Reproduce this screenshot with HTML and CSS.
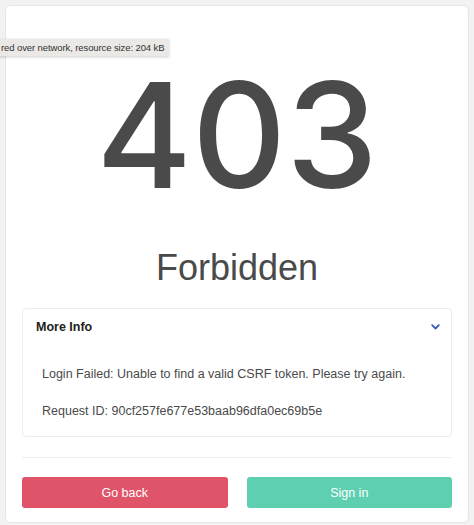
FILE: index.html
```html
<!DOCTYPE html>
<html lang="en">
  <head>
    <meta charset="UTF-8" />
    <meta name="viewport" content="width=device-width, initial-scale=1.0" />
    <title>403 Forbidden</title>
    <link rel="stylesheet" href="styles.css">
  </head>
  <body>
    <!-- Error card -->
    <main class="error-card">
      <h1 class="error-code">403</h1>
      <h2 class="error-title">Forbidden</h2>

      <section class="more-info">
        <div class="more-info-header">
          <span>More Info</span>
          <svg class="chevron" width="9" height="6" viewBox="0 0 9 6">
            <path d="M1.2 1.2 L4.5 4.5 L7.8 1.2" fill="none" stroke="#3b5bc4" stroke-width="1.8" stroke-linecap="round" stroke-linejoin="round" />
          </svg>
        </div>
        <div class="more-info-body">
          <p>Login Failed: Unable to find a valid CSRF token. Please try again.</p>
          <p>Request ID: 90cf257fe677e53baab96dfa0ec69b5e</p>
        </div>
      </section>

      <hr class="divider" />

      <div class="actions">
        <button class="btn btn-back">Go back</button>
        <button class="btn btn-signin">Sign in</button>
      </div>
    </main>

    <!-- Browser tooltip over the page -->
    <div class="tooltip">red over network, resource size: 204 kB</div>
  </body>
</html>
```

FILE: styles.css
```css
body {
  margin: 0;
  background: #f2f2f2;
  font-family: "Liberation Sans", Arial, sans-serif;
  color: #4a4a4a;
}

.error-card {
  margin: 5px;
  height: 518px;
  box-sizing: border-box;
  padding: 56px 16px 14px;
  background: #fff;
  border: 1px solid #e6e6e6;
  border-radius: 6px;
  display: flex;
  flex-direction: column;
}

.error-code {
  margin: 0;
  font-family: Inter, "Liberation Sans", sans-serif;
  font-size: 146px;
  line-height: 146px;
  font-weight: 500;
  text-align: center;
  color: #4a4a4a;
}

.error-title {
  margin: 42px 0 22px;
  font-size: 36px;
  line-height: 36px;
  font-weight: normal;
  text-align: center;
  color: #4a4a4a;
}

.more-info {
  border: 1px solid #ececec;
  border-radius: 4px;
}

.more-info-header {
  display: flex;
  justify-content: space-between;
  align-items: center;
  padding: 9px 11px 10px 13px;
  line-height: 18px;
  font-size: 12.5px;
  font-weight: bold;
  color: #222;
}

.more-info-body {
  padding: 18px 19px 15px;
  font-size: 12.5px;
  line-height: 20px;
}

.more-info-body p {
  margin: 0;
}

.more-info-body p + p {
  margin-top: 17px;
}

.divider {
  margin: 20px 0 19px;
  border: none;
  border-top: 1px solid #eeeeee;
}

.actions {
  display: grid;
  grid-template-columns: 1fr 1fr;
  gap: 19px;
}

.btn {
  height: 31px;
  border: none;
  border-radius: 3px;
  color: #fff;
  font-family: inherit;
  font-size: 12.5px;
  cursor: pointer;
}

.btn-back {
  background: #e0546a;
}

.btn-signin {
  background: #5ecfb1;
}

.tooltip {
  position: absolute;
  top: 39px;
  left: -3px;
  padding: 2px 5px 2px 4px;
  background: #ebe9e5;
  box-shadow: 0 1px 3px rgba(0, 0, 0, 0.2);
  font-size: 9.5px;
  letter-spacing: -0.1px;
  line-height: 13px;
  color: #333;
}
```
